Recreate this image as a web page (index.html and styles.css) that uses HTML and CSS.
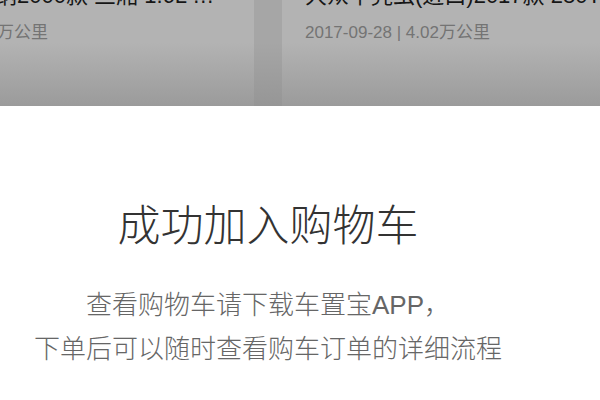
FILE: index.html
```html
<!DOCTYPE html>
<html lang="zh-CN">
<head>
    <meta charset="UTF-8">
    <meta name="viewport" content="width=device-width, initial-scale=1.0">
    <title>车置宝 - 购物车</title>
    <link rel="stylesheet" href="styles.css">
</head>
<body>
    <div class="car-list">
        <div class="car-card">
            <div class="car-title">上海大众桑塔纳2000款 三厢 1.6L 手...</div>
            <div class="car-meta">2016-05-12 | 3.15万公里</div>
        </div>
        <div class="car-card">
            <div class="car-title">大众甲壳虫(进口)2017款 280TSI 尊享版</div>
            <div class="car-meta">2017-09-28 | 4.02万公里</div>
        </div>
    </div>

    <div class="modal">
        <h1>成功加入购物车</h1>
        <p>查看购物车请下载车置宝APP，<br>下单后可以随时查看购车订单的详细流程</p>
    </div>
</body>
</html>
```

FILE: styles.css
```css
body {
    margin: 0;
    padding: 0;
    width: 600px;
    height: 400px;
    overflow: hidden;
    font-family: "Liberation Sans", "Noto Sans CJK SC", sans-serif;
    background-color: #fff;
}
.car-list {
    display: flex;
    gap: 28px;
    height: 106px;
    margin-left: -160px;
    background: linear-gradient(#a6a6a6 40%, #969696);
    overflow: hidden;
}
.car-card {
    flex: 0 0 414px;
    box-sizing: border-box;
    padding: 0 23px;
    background: linear-gradient(#b3b3b3 40%, #9b9b9b);
    white-space: nowrap;
    overflow: hidden;
}
.car-title {
    margin-top: -17px;
    font-size: 22px;
    line-height: 26px;
    color: #161616;
    overflow: hidden;
    text-overflow: ellipsis;
}
.car-meta {
    margin-top: 14px;
    font-size: 17px;
    line-height: 20px;
    color: #747474;
}
.modal {
    width: 536px;
    text-align: center;
}
.modal h1 {
    margin: 0;
    padding-top: 95px;
    font-size: 43px;
    line-height: 50px;
    font-weight: 300;
    color: #333;
}
.modal p {
    margin: 0;
    padding-top: 32px;
    font-size: 26px;
    line-height: 44px;
    font-weight: 300;
    color: #666;
}
```
